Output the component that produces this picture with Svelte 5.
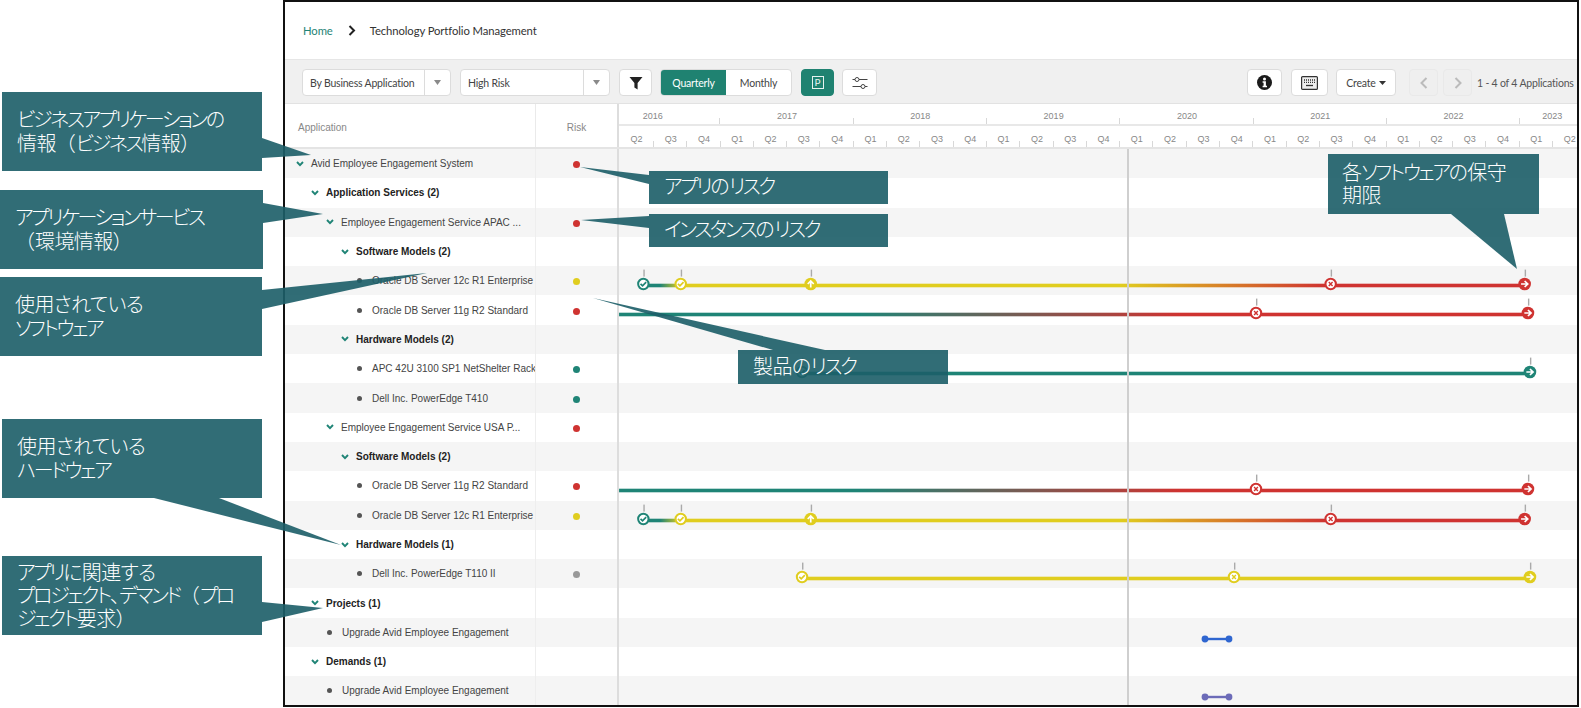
<script>
	const GREEN = '#1f8476';
	const YELLOW = '#e0cd1f';
	const RED = '#cf3331';
	const GREY = '#999999';

	const years = [
		{ label: '2016', width: 101.4, pad: 34 },
		{ label: '2017', width: 133.3 },
		{ label: '2018', width: 133.3 },
		{ label: '2019', width: 133.3 },
		{ label: '2020', width: 133.3 },
		{ label: '2021', width: 133.3 },
		{ label: '2022', width: 133.3 },
		{ label: '2023', width: 133.3, pad: 69 }
	];

	const quarters = ['Q2', 'Q3', 'Q4'];
	for (let y = 0; y < 6; y++) quarters.push('Q1', 'Q2', 'Q3', 'Q4');
	quarters.push('Q1', 'Q2');

	// bar shapes, x is in page pixels
	const bar12c = {
		from: 643,
		to: 1525,
		stops: [[660, GREEN], [680, YELLOW], [1120, YELLOW], [1325, RED]],
		marks: [
			{ x: 643.3, type: 'check', color: GREEN },
			{ x: 680.7, type: 'check', color: YELLOW },
			{ x: 810.7, type: 'up', color: YELLOW },
			{ x: 1330.7, type: 'x', color: RED },
			{ x: 1524.7, type: 'arrow', color: RED }
		]
	};
	const bar11g = {
		from: 619,
		to: 1528,
		stops: [[860, GREEN], [1180, RED]],
		marks: [
			{ x: 1256, type: 'x', color: RED },
			{ x: 1528, type: 'arrow', color: RED }
		]
	};
	const barApc = {
		from: 802,
		to: 1530,
		stops: [[802, GREEN], [1530, GREEN]],
		marks: [
			{ x: 802, type: 'check', color: GREEN },
			{ x: 1530, type: 'arrow', color: GREEN }
		]
	};
	const barT110 = {
		from: 802,
		to: 1530,
		stops: [[802, YELLOW], [1530, YELLOW]],
		marks: [
			{ x: 802, type: 'check', color: YELLOW },
			{ x: 1234, type: 'x', color: YELLOW },
			{ x: 1530, type: 'arrow', color: YELLOW }
		]
	};

	const rows = [
		{ name: 'Avid Employee Engagement System', level: 0, risk: RED },
		{ name: 'Application Services (2)', level: 1, bold: true },
		{ name: 'Employee Engagement Service APAC ...', level: 2, risk: RED },
		{ name: 'Software Models (2)', level: 3, bold: true },
		{ name: 'Oracle DB Server 12c R1 Enterprise', level: 4, leaf: true, risk: YELLOW, bar: bar12c },
		{ name: 'Oracle DB Server 11g R2 Standard', level: 4, leaf: true, risk: RED, bar: bar11g },
		{ name: 'Hardware Models (2)', level: 3, bold: true },
		{ name: 'APC 42U 3100 SP1 NetShelter Rack', level: 4, leaf: true, risk: GREEN, bar: barApc },
		{ name: 'Dell Inc. PowerEdge T410', level: 4, leaf: true, risk: GREEN },
		{ name: 'Employee Engagement Service USA P...', level: 2, risk: RED },
		{ name: 'Software Models (2)', level: 3, bold: true },
		{ name: 'Oracle DB Server 11g R2 Standard', level: 4, leaf: true, risk: RED, bar: bar11g },
		{ name: 'Oracle DB Server 12c R1 Enterprise', level: 4, leaf: true, risk: YELLOW, bar: bar12c },
		{ name: 'Hardware Models (1)', level: 3, bold: true },
		{ name: 'Dell Inc. PowerEdge T110 II', level: 4, leaf: true, risk: GREY, bar: barT110 },
		{ name: 'Projects (1)', level: 1, bold: true },
		{ name: 'Upgrade Avid Employee Engagement', level: 2, leaf: true, span: '#2f66d0' },
		{ name: 'Demands (1)', level: 1, bold: true },
		{ name: 'Upgrade Avid Employee Engagement', level: 2, leaf: true, span: '#6c6bb8' }
	];

	const callouts = [
		{ id: 'a', lines: ['ビジネスアプリケーションの', '情報（ビジネス情報）'] },
		{ id: 'b', lines: ['アプリケーションサービス', '（環境情報）'] },
		{ id: 'c', lines: ['使用されている', 'ソフトウェア'] },
		{ id: 'd', lines: ['使用されている', 'ハードウェア'] },
		{ id: 'e', lines: ['アプリに関連する', 'プロジェクト、デマンド（プロ', 'ジェクト要求）'] },
		{ id: 'f', lines: ['アプリのリスク'] },
		{ id: 'g', lines: ['インスタンスのリスク'] },
		{ id: 'h', lines: ['製品のリスク'] },
		{ id: 'i', lines: ['各ソフトウェアの保守', '期限'] }
	];

	const tails = [
		'262,138 311,155 262,158',
		'263,203 323,214 263,223',
		'262,290 427,273 262,309',
		'154,498 219,498 341,545',
		'262,602 323,608 262,622',
		'580,167 649,175 649,184',
		'581,220 649,216 649,228',
		'593,298 825,350 773,350',
		'1451,214 1504,214 1517,269'
	];

	function segments(line) {
		return line.split(/([ァ-ヶー]+|[（）])/).filter(Boolean).map((text) => ({
			text,
			kind: /[（）]/.test(text) ? 'paren' : /[ァ-ヶー]/.test(text) ? 'kata' : 'plain'
		}));
	}
</script>

<div class="frame">
	<div class="crumbs">
		<span class="home">Home</span>
		<svg class="crumb-sep" width="8" height="11" viewBox="0 0 8 11"><path d="M1.5 1 L6 5.5 L1.5 10" fill="none" stroke="#222" stroke-width="2" /></svg>
		<span>Technology Portfolio Management</span>
	</div>

	<div class="toolbar">
		<div class="select first">
			<span class="select-text">By Business Application</span>
			<span class="select-arrow"><svg width="7" height="5" viewBox="0 0 7 5"><path d="M0 0 H7 L3.5 5 Z" fill="#8a8a8a" /></svg></span>
		</div>
		<div class="select second">
			<span class="select-text">High Risk</span>
			<span class="select-arrow"><svg width="7" height="5" viewBox="0 0 7 5"><path d="M0 0 H7 L3.5 5 Z" fill="#8a8a8a" /></svg></span>
		</div>
		<button class="btn filter" aria-label="Filter">
			<svg width="14" height="14" viewBox="0 0 14 14"><path d="M0.5 1 H13.5 L8.6 7 V13.5 L5.4 11.5 V7 Z" fill="#222" /></svg>
		</button>
		<div class="segment">
			<span class="seg on">Quarterly</span>
			<span class="seg">Monthly</span>
		</div>
		<button class="btn pbtn"><span class="pbox">P</span></button>
		<button class="btn sliders" aria-label="Settings">
			<svg width="16" height="14" viewBox="0 0 16 14" fill="none" stroke="#444" stroke-width="1">
				<circle cx="5" cy="3.5" r="2" />
				<path d="M0.5 3.5 H3 M7 3.5 H15.5" />
				<circle cx="11" cy="10.5" r="2" />
				<path d="M0.5 10.5 H9 M13 10.5 H15.5" />
			</svg>
		</button>
		<button class="btn info" aria-label="Info">
			<svg width="15" height="15" viewBox="0 0 15 15">
				<circle cx="7.5" cy="7.5" r="7.5" fill="#1b1b1b" />
				<circle cx="7.5" cy="3.9" r="1.5" fill="#fff" />
				<path d="M5.6 6.2 H8.9 V10.7 H10 V12.2 H5.6 V10.7 H6.6 V7.7 H5.6 Z" fill="#fff" />
			</svg>
		</button>
		<button class="btn keyboard" aria-label="Keyboard">
			<svg width="17" height="14" viewBox="0 0 17 14" fill="none">
				<rect x="0.6" y="0.6" width="15.8" height="12.8" rx="1" stroke="#333" stroke-width="1.2" fill="#eee" />
				<path d="M3 4 H14 M3 6.3 H14" stroke="#333" stroke-width="1.3" stroke-dasharray="1 1" />
				<path d="M5 9.5 H12" stroke="#333" stroke-width="1.3" />
			</svg>
		</button>
		<button class="btn create">Create <svg width="7" height="4" viewBox="0 0 7 4"><path d="M0 0 H7 L3.5 4 Z" fill="#333" /></svg></button>
		<button class="btn page prev" aria-label="Previous">
			<svg width="8" height="12" viewBox="0 0 8 12"><path d="M6.5 1 L1.5 6 L6.5 11" fill="none" stroke="#bbb" stroke-width="2" /></svg>
		</button>
		<button class="btn page next" aria-label="Next">
			<svg width="8" height="12" viewBox="0 0 8 12"><path d="M1.5 1 L6.5 6 L1.5 11" fill="none" stroke="#bbb" stroke-width="2" /></svg>
		</button>
		<span class="count">1 - 4 of 4 Applications</span>
	</div>

	<div class="head">
		<div class="head-app">Application</div>
		<div class="head-risk">Risk</div>
		<div class="head-time">
			<div class="year-row">
				{#each years as y}
					<div class="year" style="width: {y.width}px; padding-right: {y.pad || 0}px">{y.label}</div>
				{/each}
			</div>
			<div class="quarter-row">
				{#each quarters as q, i}
					<div class="quarter" class:wide={i === 0}>{q}</div>
				{/each}
			</div>
		</div>
	</div>

	<div class="rows">
		{#each rows as row, i}
			<div class="row" class:alt={i % 2 === 0}>
				<div class="cell-name" class:bold={row.bold} style="padding-left: {row.level * 15 + 11}px">
					{#if row.leaf}
						<span class="bullet"></span>
					{:else}
						<svg class="chev" width="8" height="6" viewBox="0 0 8 6"><path d="M1 1 L4 4.2 L7 1" fill="none" stroke="#1f8476" stroke-width="1.9" /></svg>
					{/if}
					<span class="name">{row.name}</span>
				</div>
				<div class="cell-risk">
					{#if row.risk}
						<span class="dot" style="background: {row.risk}"></span>
					{/if}
				</div>
				<div class="cell-time">
					{#if row.bar}
						<svg class="gantt" width="962" height="29.3" viewBox="617 0 962 29.3">
							<defs>
								<linearGradient id="grad{i}" gradientUnits="userSpaceOnUse" x1="617" x2="1579" y1="0" y2="0">
									{#each row.bar.stops as s}
										<stop offset={(s[0] - 617) / 962} stop-color={s[1]} />
									{/each}
								</linearGradient>
							</defs>
							<rect x={row.bar.from} y="17.7" width={row.bar.to - row.bar.from} height="3.6" fill="url(#grad{i})" />
							{#each row.bar.marks as m}
								<rect x={m.x} y="3.6" width="1.4" height="7" fill="#aaa" />
								<g transform="translate({m.x} 18)">
									{#if m.type === 'check'}
										<circle r="5.2" fill="#fff" stroke={m.color} stroke-width="2" />
										<path d="M-2.8 -0.2 L-0.8 1.8 L2.8 -1.9" fill="none" stroke={m.color} stroke-width="1.7" />
									{:else if m.type === 'x'}
										<circle r="5.2" fill="#fff" stroke={m.color} stroke-width="2" />
										<path d="M-1.9 -1.9 L1.9 1.9 M1.9 -1.9 L-1.9 1.9" fill="none" stroke={m.color} stroke-width="1.4" />
									{:else if m.type === 'up'}
										<circle r="6.3" fill={m.color} />
										<path d="M0 3.6 V-2.8 M-3 0 L0 -3.1 L3 0" fill="none" stroke="#fff" stroke-width="1.7" />
									{:else}
										<circle r="6.3" fill={m.color} />
										<path d="M-3.6 0 H2.8 M0 -3 L3.1 0 L0 3" fill="none" stroke="#fff" stroke-width="1.7" />
									{/if}
								</g>
							{/each}
						</svg>
					{/if}
					{#if row.span}
						<svg class="gantt" width="962" height="29.3" viewBox="617 0 962 29.3">
							<rect x="1205" y="19.8" width="24" height="2.4" fill={row.span} />
							<circle cx="1205" cy="21" r="3.4" fill={row.span} />
							<circle cx="1229" cy="21" r="3.4" fill={row.span} />
						</svg>
					{/if}
				</div>
			</div>
		{/each}
		<div class="today"></div>
	</div>
</div>

<svg class="tails" width="1581" height="708" viewBox="0 0 1581 708">
	{#each tails as points}
		<polygon {points} />
	{/each}
</svg>

{#each callouts as c}
	<div class="callout c-{c.id}">
		{#each c.lines as line}
			<div>{#each segments(line) as s}<span class={s.kind}>{s.text}</span>{/each}</div>
		{/each}
	</div>
{/each}

<style>
	:global(body) {
		margin: 0;
		background: #fff;
		overflow: hidden;
	}

	.frame {
		box-sizing: border-box;
		width: 1296px;
		height: 707px;
		margin-left: 283px;
		border: 2px solid #111;
		overflow: hidden;
		font-family: "Liberation Sans", Arial, sans-serif;
		color: #444;
		background: #fff;
	}

	.crumbs {
		height: 58px;
		display: flex;
		align-items: center;
		padding-left: 18px;
		font-family: Lato, "Noto Sans", sans-serif;
		font-size: 11.3px;
		letter-spacing: -0.1px;
		color: #333;
		border-bottom: 1px solid #e6e6e6;
		box-sizing: border-box;
	}

	.home {
		color: #1f8476;
	}

	.crumb-sep {
		margin: 0 14px 0 15px;
	}

	.toolbar {
		height: 44px;
		box-sizing: border-box;
		background: #f0f0f0;
		border-bottom: 1px solid #e2e2e2;
		display: flex;
		align-items: center;
		padding: 2px 0 0 17px;
		font-family: Lato, "Noto Sans", sans-serif;
		font-size: 10.5px;
		letter-spacing: -0.2px;
		color: #444;
		white-space: nowrap;
	}

	.select,
	.btn,
	.segment {
		box-sizing: border-box;
		height: 27px;
		background: #fff;
		border: 1px solid #dcdcdc;
		border-radius: 4px;
		flex: none;
	}

	.select {
		display: flex;
		align-items: stretch;
	}

	.select.first {
		width: 149px;
		margin-right: 9px;
	}

	.select.second {
		width: 150px;
		margin-right: 9px;
	}

	.select-text {
		flex: 1;
		line-height: 27px;
		padding-left: 7px;
	}

	.select-arrow {
		width: 25px;
		border-left: 1px solid #dcdcdc;
		display: flex;
		align-items: center;
		justify-content: center;
	}

	.btn {
		display: flex;
		align-items: center;
		justify-content: center;
		padding: 0;
		font: inherit;
		letter-spacing: inherit;
		color: inherit;
	}

	.filter {
		width: 33px;
		margin-right: 8px;
	}

	.segment {
		width: 132px;
		display: flex;
		margin-right: 9px;
		overflow: hidden;
	}

	.seg {
		flex: 1;
		text-align: center;
		line-height: 26px;
	}

	.seg.on {
		background: #1f8271;
		color: #fff;
	}

	.pbtn {
		width: 33px;
		margin-right: 8px;
		background: #1f8271;
		border-color: #1f8271;
	}

	.pbox {
		box-sizing: border-box;
		width: 12px;
		height: 13px;
		border: 1px solid #e6f2ef;
		color: #e6f2ef;
		font-size: 10px;
		line-height: 11px;
		text-align: center;
	}

	.sliders {
		width: 35px;
		margin-right: 370px;
	}

	.info {
		width: 35px;
		margin-right: 9px;
	}

	.keyboard {
		width: 37px;
		margin-right: 8px;
	}

	.create {
		width: 60px;
		gap: 3px;
		margin-right: 13px;
	}

	.page {
		width: 29px;
		background: #efefef;
		border-color: #e9e9e9;
		margin-right: 5px;
	}

	.count {
		color: #555;
		flex: none;
	}

	.head {
		height: 45px;
		display: flex;
		box-sizing: border-box;
		border-bottom: 2px solid #e4e4e4;
		font-size: 10px;
		color: #888;
	}

	.head-app {
		width: 251px;
		box-sizing: border-box;
		padding-left: 13px;
		line-height: 47px;
		border-right: 1px solid #eaeaea;
		flex: none;
	}

	.head-risk {
		width: 81px;
		text-align: center;
		line-height: 47px;
		flex: none;
	}

	.head-time {
		flex: none;
		width: 962px;
		box-sizing: border-box;
		border-left: 2px solid #ddd;
		font-size: 9px;
		color: #888;
	}

	.year-row {
		height: 22px;
		display: flex;
		border-bottom: 2px solid #e8e8e8;
		box-sizing: border-box;
	}

	.year {
		flex: none;
		box-sizing: border-box;
		position: relative;
		text-align: center;
		line-height: 25px;
	}

	.year::after,
	.quarter::after {
		content: '';
		position: absolute;
		right: 0;
		bottom: 0;
		width: 1px;
		height: 6px;
		background: #d8d8d8;
	}

	.quarter-row {
		height: 21px;
		display: flex;
	}

	.quarter {
		flex: none;
		width: 33.3px;
		position: relative;
		text-align: center;
		line-height: 26px;
	}

	.quarter.wide {
		width: 35px;
	}

	.rows {
		position: relative;
	}

	.row {
		height: 29.31px;
		display: flex;
		background: #fff;
	}

	.row.alt {
		background: #f5f5f5;
	}

	.cell-name {
		width: 251px;
		box-sizing: border-box;
		flex: none;
		display: flex;
		align-items: center;
		border-right: 1px solid #eeeeee;
		font-size: 10px;
		color: #444;
		white-space: nowrap;
		overflow: hidden;
	}

	.cell-name.bold {
		font-weight: bold;
		color: #222;
	}

	.chev {
		flex: none;
		margin: 0 7px 0 0;
	}

	.bullet {
		flex: none;
		width: 5px;
		height: 5px;
		border-radius: 50%;
		background: #555;
		margin-right: 10px;
		margin-left: 1px;
	}

	.cell-risk {
		width: 81px;
		flex: none;
		display: flex;
		align-items: center;
		justify-content: center;
	}

	.dot {
		width: 7px;
		height: 7px;
		border-radius: 50%;
		margin-top: 2px;
	}

	.cell-time {
		flex: none;
		width: 962px;
		box-sizing: border-box;
		border-left: 2px solid #ddd;
		position: relative;
	}

	.gantt {
		display: block;
		margin-left: -2px;
	}

	.today {
		position: absolute;
		left: 842px;
		top: 0;
		bottom: 0;
		width: 2px;
		background: #cfcfcf;
	}

	.tails {
		position: absolute;
		left: 0;
		top: 0;
		pointer-events: none;
	}

	.tails polygon {
		fill: rgba(29, 94, 104, 0.91);
	}

	.callout {
		position: absolute;
		box-sizing: border-box;
		display: flex;
		flex-direction: column;
		justify-content: center;
		background: rgba(29, 94, 104, 0.91);
		color: #fff;
		font-family: "Noto Sans CJK JP", sans-serif;
		font-size: 20px;
		font-weight: 300;
		font-feature-settings: "palt";
		letter-spacing: -0.6px;
		line-height: 23.3px;
		white-space: nowrap;
		padding-bottom: 2px;
	}

	.kata {
		letter-spacing: -2.4px;
	}

	.paren {
		font-feature-settings: normal;
		letter-spacing: 0;
	}

	.c-a { left: 2px; top: 92px; width: 260px; height: 79px; padding-left: 15px; }
	.c-b { left: 0; top: 190px; width: 263px; height: 79px; padding-left: 15px; }
	.c-c { left: 0; top: 277px; width: 262px; height: 79px; padding-left: 15px; }
	.c-d { left: 2px; top: 419px; width: 260px; height: 79px; padding-left: 15px; }
	.c-e { left: 2px; top: 556px; width: 260px; height: 79px; padding-left: 15px; }
	.c-f { left: 649px; top: 171px; width: 239px; height: 33px; padding: 0 0 4px 15px; }
	.c-g { left: 649px; top: 214px; width: 239px; height: 33px; padding: 0 0 3px 15px; }
	.c-h { left: 738px; top: 350px; width: 210px; height: 34px; padding-left: 15px; }
	.c-i { left: 1328px; top: 154px; width: 211px; height: 60px; padding-left: 14px; }
</style>
